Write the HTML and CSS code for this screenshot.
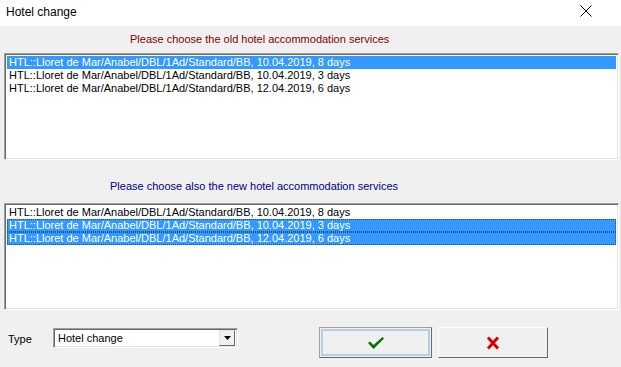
FILE: index.html
```html
<!DOCTYPE html>
<html lang="en">
<head>
    <meta charset="UTF-8">
    <title>Hotel change</title>
    <link rel="stylesheet" href="styles.css">
</head>
<body>
    <div id="dialog">
        <div class="titlebar">
            <span class="title">Hotel change</span>
            <svg class="close" width="12" height="12" viewBox="0 0 12 12">
                <path d="M0.5 0.5 L11.5 11.5 M11.5 0.5 L0.5 11.5" stroke="#000" stroke-width="1" fill="none"/>
            </svg>
        </div>

        <div class="client">
            <div class="caption caption-old">Please choose the old hotel accommodation services</div>
            <div class="listbox">
                <div class="item selected">HTL::Lloret de Mar/Anabel/DBL/1Ad/Standard/BB, 10.04.2019, 8 days</div>
                <div class="item">HTL::Lloret de Mar/Anabel/DBL/1Ad/Standard/BB, 10.04.2019, 3 days</div>
                <div class="item">HTL::Lloret de Mar/Anabel/DBL/1Ad/Standard/BB, 12.04.2019, 6 days</div>
            </div>

            <div class="caption caption-new">Please choose also the new hotel accommodation services</div>
            <div class="listbox">
                <div class="item">HTL::Lloret de Mar/Anabel/DBL/1Ad/Standard/BB, 10.04.2019, 8 days</div>
                <div class="item selected focus">HTL::Lloret de Mar/Anabel/DBL/1Ad/Standard/BB, 10.04.2019, 3 days</div>
                <div class="item selected focus">HTL::Lloret de Mar/Anabel/DBL/1Ad/Standard/BB, 12.04.2019, 6 days</div>
            </div>

            <div class="bottom">
                <span class="type-label">Type</span>
                <div class="combo">
                    <span class="combo-text">Hotel change</span>
                    <span class="combo-btn">
                        <svg width="7" height="4" viewBox="0 0 7 4"><path d="M0 0 H7 L3.5 4 Z" fill="#000"/></svg>
                    </span>
                </div>
                <div class="btn btn-default">
                    <svg width="18" height="14" viewBox="0 0 18 14">
                        <path d="M1 7 L3 5.5 L6.5 9 L15.5 1 L17 2.5 L6.5 13 Z" fill="#0a6e0a"/>
                    </svg>
                </div>
                <div class="btn">
                    <svg width="14" height="14" viewBox="0 0 14 14">
                        <path d="M2 1.5 L12 12.5 M12 1.5 L2 12.5" stroke="#e00000" stroke-width="3" fill="none"/>
                    </svg>
                </div>
            </div>
        </div>
    </div>
</body>
</html>
```

FILE: styles.css
```css
body {
    margin: 0;
    background: #f0f0f0;
    font-family: "Liberation Sans", Arial, sans-serif;
    font-size: 11px;
}

#dialog {
    width: 621px;
    height: 367px;
    display: flex;
    flex-direction: column;
}

.titlebar {
    height: 26px;
    background: #fff;
    display: flex;
    align-items: center;
    justify-content: space-between;
    padding: 0 29px 0 6px;
}

.title {
    font-size: 12px;
    color: #000;
    margin-top: -3px;
}

.close {
    margin-top: -4px;
}

.client {
    flex: 1;
    padding: 0 2px 0 4px;
}

.caption {
    height: 27px;
    line-height: 27px;
    font-size: 11px;
}

.caption-old {
    color: #800000;
    padding-left: 126px;
}

.caption-new {
    color: #000080;
    height: 43px;
    line-height: 33px;
    padding-top: 10px;
    box-sizing: border-box;
    padding-left: 106px;
}

.listbox {
    height: 107px;
    background: #fff;
    border-top: 1px solid #a0a0a0;
    border-left: 1px solid #a0a0a0;
    border-right: 1px solid #fff;
    border-bottom: 1px solid #fff;
    box-shadow: inset 1px 1px 0 #696969, inset -1px -1px 0 #e3e3e3;
    padding: 2px 2px;
    box-sizing: border-box;
}

.item {
    height: 13px;
    line-height: 13px;
    padding-left: 2px;
    color: #000;
    white-space: nowrap;
    box-sizing: border-box;
}

.item.selected {
    background: #3399ff;
    color: #fff;
}

.item.focus {
    outline: 1px dotted #1a4f8a;
    outline-offset: -1px;
}

.bottom {
    display: flex;
    align-items: flex-start;
    margin-top: 17px;
}

.type-label {
    width: 45px;
    padding-left: 4px;
    margin-top: 2px;
    line-height: 20px;
    font-size: 11px;
}

.combo {
    width: 185px;
    height: 20px;
    margin-top: 1px;
    box-sizing: border-box;
    background: #fff;
    border-top: 1px solid #a0a0a0;
    border-left: 1px solid #a0a0a0;
    border-right: 1px solid #fff;
    border-bottom: 1px solid #fff;
    box-shadow: inset 1px 1px 0 #696969, inset -1px -1px 0 #e3e3e3;
    display: flex;
    align-items: center;
    justify-content: space-between;
    padding: 2px 2px 2px 4px;
}

.combo-btn {
    width: 16px;
    height: 16px;
    box-sizing: border-box;
    background: #f0f0f0;
    border-top: 1px solid #e3e3e3;
    border-left: 1px solid #e3e3e3;
    border-right: 1px solid #696969;
    border-bottom: 1px solid #696969;
    display: flex;
    align-items: center;
    justify-content: center;
}

.btn {
    width: 110px;
    height: 31px;
    box-sizing: border-box;
    background: #f0f0f0;
    border-top: 1px solid #fff;
    border-left: 1px solid #fff;
    border-right: 1px solid #696969;
    border-bottom: 1px solid #696969;
    display: flex;
    align-items: center;
    justify-content: center;
    margin-left: 6px;
}

.btn-default {
    width: 113px;
    margin-left: 81px;
    border-left-color: #a0a0a0;
    border-top-color: #a0a0a0;
    box-shadow: inset 0 0 0 1px #f0f0f0, inset 0 0 0 3px #b9cbe6;
}
```
